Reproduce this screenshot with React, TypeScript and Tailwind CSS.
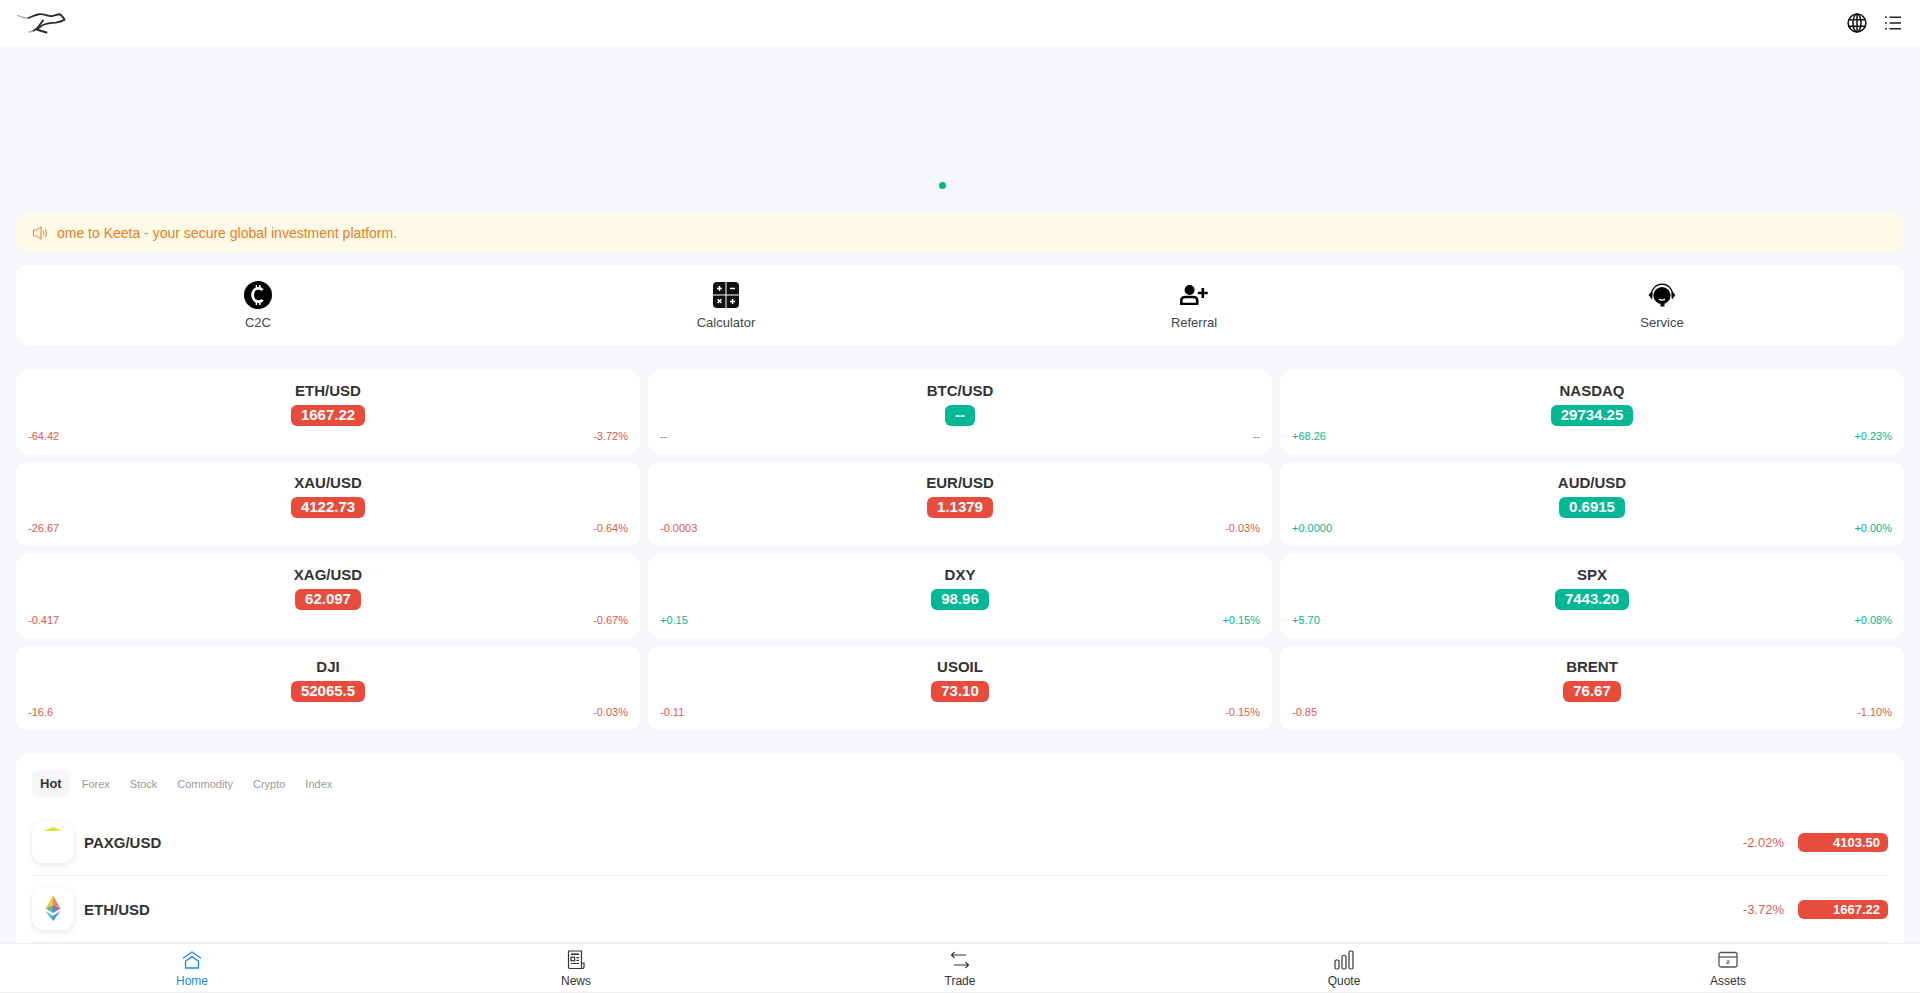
const tickers = [
  { name: "ETH/USD", price: "1667.22", diff: "-64.42", pct: "-3.72%", dir: "down" },
  { name: "BTC/USD", price: "--", diff: "--", pct: "--", dir: "none" },
  { name: "NASDAQ", price: "29734.25", diff: "+68.26", pct: "+0.23%", dir: "up" },
  { name: "XAU/USD", price: "4122.73", diff: "-26.67", pct: "-0.64%", dir: "down" },
  { name: "EUR/USD", price: "1.1379", diff: "-0.0003", pct: "-0.03%", dir: "down" },
  { name: "AUD/USD", price: "0.6915", diff: "+0.0000", pct: "+0.00%", dir: "up" },
  { name: "XAG/USD", price: "62.097", diff: "-0.417", pct: "-0.67%", dir: "down" },
  { name: "DXY", price: "98.96", diff: "+0.15", pct: "+0.15%", dir: "up" },
  { name: "SPX", price: "7443.20", diff: "+5.70", pct: "+0.08%", dir: "up" },
  { name: "DJI", price: "52065.5", diff: "-16.6", pct: "-0.03%", dir: "down" },
  { name: "USOIL", price: "73.10", diff: "-0.11", pct: "-0.15%", dir: "down" },
  { name: "BRENT", price: "76.67", diff: "-0.85", pct: "-1.10%", dir: "down" },
];

function Logo() {
  return (
    <svg viewBox="8 6 60 24" className="h-[24px] w-[60px]" fill="none" strokeLinecap="round" strokeLinejoin="round">
      <path d="M20 13C23 12.6 26 9.8 31 9.2C35 8.8 39 10.5 43 11.2C46 11.4 49 9 52 9.2C54 11 56 13 56.5 14.8C54 16 51 17 48 17.6C43 17.6 38 18.5 34 20.5L28.5 24.5L38.5 27.5" stroke="#2b2d33" strokeWidth="1.9" />
      <path d="M35 15.5L29 23.5L25 26" stroke="#2b2d33" strokeWidth="1.9" />
      <path d="M10 10.5C13 12.5 16 13.2 20 13" stroke="#a9abb0" strokeWidth="1.5" />
      <path d="M25 26L21 27" stroke="#a9abb0" strokeWidth="1.5" />
    </svg>
  );
}

function Globe() {
  return (
    <svg viewBox="0 0 20 20" className="h-[20px] w-[20px]" fill="none" stroke="#111" strokeWidth="1.5">
      <circle cx="10" cy="10" r="8.9" />
      <ellipse cx="10" cy="10" rx="4" ry="8.9" />
      <path d="M1.6 6.8H18.4M1.6 13.2H18.4M10 1V19" />
    </svg>
  );
}

function ListIcon() {
  return (
    <svg viewBox="0 0 16 14" className="h-[14px] w-[16px]" fill="none" stroke="#222" strokeWidth="1.4">
      <path d="M4.5 1.2H16M4.5 7H16M4.5 12.8H16" />
      <path d="M0 1.2H1.8M0 7H1.8M0 12.8H1.8" />
    </svg>
  );
}

function CoinIcon() {
  return (
    <svg viewBox="0 0 28 28" className="h-[28px] w-[28px]">
      <circle cx="14" cy="14" r="14" fill="#000" />
      <path d="M18.6 9.2C17.6 8 16 7.4 14.6 7.4C11 7.4 8.6 10.2 8.6 14C8.6 17.8 11 20.6 14.6 20.6C16 20.6 17.6 20 18.6 18.8" fill="none" stroke="#fff" strokeWidth="2.8" />
      <path d="M12.4 4V7.6M15.8 4V7.6M12.4 20.4V24M15.8 20.4V24" stroke="#fff" strokeWidth="1.5" />
    </svg>
  );
}

function CalcIcon() {
  return (
    <svg viewBox="0 0 26 26" className="h-[26px] w-[26px]">
      <rect x="0" y="0" width="26" height="26" rx="4" fill="#111" />
      <path d="M13 0V26M0 13H26" stroke="#fff" strokeWidth="1" />
      <path d="M4 6.5H9M6.5 4V9M17 6.5H22M4.6 17.2L8.4 21M8.4 17.2L4.6 21M17 19.5H22M19.5 17V22" stroke="#fff" strokeWidth="1.5" />
    </svg>
  );
}

function ReferralIcon() {
  return (
    <svg viewBox="0 0 28 20" className="h-[20px] w-[28px]">
      <circle cx="9.6" cy="5" r="5" fill="#000" />
      <path d="M1.3 19V15.5C1.3 13.2 3 12 5.5 12H13C15.5 12 17.2 13.2 17.2 15.5V19Z" fill="none" stroke="#000" strokeWidth="2.6" strokeLinejoin="round" />
      <path d="M22.8 3V13M17.8 8H27.8" stroke="#000" strokeWidth="2.6" />
    </svg>
  );
}

function ServiceIcon() {
  return (
    <svg viewBox="0 0 28 24" className="h-[24px] w-[28px]">
      <path d="M3.6 11.5A10.4 10.4 0 0 1 24.4 11.5" fill="none" stroke="#000" strokeWidth="1.3" />
      <circle cx="14" cy="12.5" r="8.6" fill="#000" />
      <path d="M4 8L0.6 12L4 16.5C4.8 13.5 4.8 11 4 8Z M24 8L27.4 12L24 16.5C23.2 13.5 23.2 11 24 8Z" fill="#000" />
      <path d="M11 16C12.5 17.4 15.5 17.4 17 16" fill="none" stroke="#fff" strokeWidth="1.2" />
      <path d="M12.5 20.5H16.5V23.5H12.5Z" fill="#000" />
    </svg>
  );
}

function HomeIcon() {
  return (
    <svg viewBox="0 0 20 18" className="h-[18px] w-[20px]" fill="none" stroke="#1e88e5" strokeWidth="1.3" strokeLinejoin="round">
      <path d="M1 7.2L10 1L19 7.2" />
      <path d="M3.5 10.2L10 5.6L16.5 10.2V17H3.5Z" />
    </svg>
  );
}

function NewsIcon() {
  return (
    <svg viewBox="0 0 20 20" className="h-[20px] w-[20px]" fill="none" stroke="#333" strokeWidth="1.2">
      <path d="M2.5 1H15.5V18.5H4C3 18.5 2.5 18 2.5 17Z" />
      <path d="M15.5 13H18V17C18 18 17.4 18.5 16.6 18.5H4" />
      <path d="M5 4.2H13" strokeWidth="1.6" />
      <rect x="5" y="7.2" width="3.6" height="3.6" />
      <path d="M10.4 7.6H13M10.4 10.4H13M5 13.5H13" />
    </svg>
  );
}

function TradeIcon() {
  return (
    <svg viewBox="0 0 20 20" className="h-[20px] w-[20px]" fill="none" stroke="#333" strokeWidth="1.1">
      <path d="M1.5 5H16M4.5 2L1.5 5L4.5 8" />
      <path d="M4 15H18.5M15.5 12L18.5 15L15.5 18" />
    </svg>
  );
}

function QuoteIcon() {
  return (
    <svg viewBox="0 0 20 20" className="h-[20px] w-[20px]" fill="none" stroke="#333" strokeWidth="1.2">
      <rect x="1" y="10" width="4" height="9" rx="1.5" />
      <rect x="8" y="5.5" width="4" height="13.5" rx="1.5" />
      <rect x="15" y="1" width="4" height="18" rx="1.5" />
    </svg>
  );
}

function AssetsIcon() {
  return (
    <svg viewBox="0 0 20 18" className="h-[18px] w-[20px]" fill="none" stroke="#555" strokeWidth="1.3">
      <rect x="1" y="1.5" width="18" height="14.5" rx="2" />
      <path d="M1 6H19" />
      <path d="M8.8 9.8H11.2V11.2H8.8V12.6H11.2" strokeWidth="0.8" />
    </svg>
  );
}

function PaxgIcon() {
  return (
    <svg viewBox="0 0 42 42" className="h-[42px] w-[42px]">
      <path d="M12 10L21 6L30 10Z" fill="#dfe325" />
    </svg>
  );
}

function EthIcon() {
  return (
    <svg viewBox="0 0 42 42" className="h-[42px] w-[42px]">
      <path d="M21 7.5L13.5 20.5L21 17Z" fill="#f6c945" />
      <path d="M21 7.5L28.5 20.5L21 17Z" fill="#ee8a5e" />
      <path d="M13.5 20.5L21 17V25Z" fill="#5fb88c" />
      <path d="M28.5 20.5L21 17V25Z" fill="#8a6fc0" />
      <path d="M13.5 23L21 28V33Z" fill="#3fb6d8" />
      <path d="M28.5 23L21 28V33Z" fill="#3f8fd8" />
    </svg>
  );
}

const tabs = ["Forex", "Stock", "Commodity", "Crypto", "Index"];

export default function App() {
  return (
    <div className="flex h-[993px] flex-col overflow-hidden bg-[#f5f7fb] font-['Liberation_Sans','Arial',sans-serif] text-[#333]">
      <header className="flex h-[46px] shrink-0 items-center justify-between bg-white pl-[16px] pr-[19px]">
        <Logo />
        <div className="flex items-center gap-[18px]">
          <Globe />
          <ListIcon />
        </div>
      </header>

      <main className="flex-1 overflow-hidden px-4">
        <div className="flex h-[155px] items-end justify-center gap-[11px] pb-3">
          <span className="h-[7px] w-[7px] rounded-full bg-[#00b894]" />
          <span className="h-[7px] w-[7px] rounded-full bg-[#f2f5f9]" />
          <span className="h-[7px] w-[7px] rounded-full bg-[#f2f5f9]" />
        </div>

        <div className="mt-3 flex h-[39px] items-center rounded-[10px] bg-[#fffbe8] pl-[17px] text-[#e67e22]">
          <svg viewBox="0 0 15 14" className="h-[14px] w-[15px]" fill="none" stroke="#e67e22" strokeWidth="1">
            <path d="M0.5 4H3.5L8 0.8V13.2L3.5 10H0.5Z" />
            <path d="M10.2 4.5C11 6 11 8 10.2 9.5M12.5 3C13.8 5.5 13.8 8.5 12.5 11" />
          </svg>
          <span className="ml-[9px] pt-px text-[14px]">ome to Keeta - your secure global investment platform.</span>
        </div>

        <div className="mt-[13px] grid h-[80px] grid-cols-4 rounded-xl bg-white px-2">
          {[
            { label: "C2C", icon: <CoinIcon /> },
            { label: "Calculator", icon: <CalcIcon /> },
            { label: "Referral", icon: <ReferralIcon /> },
            { label: "Service", icon: <ServiceIcon /> },
          ].map((item) => (
            <div key={item.label} className="flex flex-col items-center pt-4">
              <div className="flex h-[28px] items-center justify-center">{item.icon}</div>
              <span className="mt-[6px] text-[13px] leading-[16px] text-[#444]">{item.label}</span>
            </div>
          ))}
        </div>

        <div className="mt-[25px] grid grid-cols-3 gap-2">
          {tickers.map((t) => {
            const badge = t.dir === "down" ? "bg-[#e74c3c]" : "bg-[#00b894]";
            const small = t.dir === "down" ? "text-[#dc5a4e]" : t.dir === "up" ? "text-[#00b894]" : "text-[#888]";
            return (
              <div key={t.name} className="flex h-[84px] flex-col items-center rounded-xl bg-white pt-3">
                <div className="text-[15px] font-bold leading-[18px]">{t.name}</div>
                <div className={`mt-[5px] flex h-[21px] items-center rounded-md px-[10px] text-[15px] font-bold text-white ${badge}`}>
                  {t.price}
                </div>
                <div className={`mt-px flex w-full justify-between px-3 text-[11px] leading-[18px] ${small}`}>
                  <span>{t.diff}</span>
                  <span>{t.pct}</span>
                </div>
              </div>
            );
          })}
        </div>

        <div className="mt-6 rounded-t-xl bg-white px-4 pt-4">
          <div className="flex items-center gap-1">
            <span className="flex h-[27px] items-center rounded-md bg-[#f5f7fb] px-2 pt-px text-[13px] font-bold">Hot</span>
            {tabs.map((tab) => (
              <span key={tab} className="px-2 pt-px text-[11px] text-[#999]">{tab}</span>
            ))}
          </div>

          <div className="mt-3">
            <div className="flex h-[66px] items-center justify-between border-b border-[#eee] box-content">
              <div className="flex items-center">
                <div className="h-[42px] w-[42px] rounded-xl bg-white shadow-[0_2px_6px_rgba(0,0,0,0.1)]">
                  <PaxgIcon />
                </div>
                <span className="ml-[10px] pt-[2px] text-[15px] font-bold">PAXG/USD</span>
              </div>
              <div className="flex items-center">
                <span className="pt-[2px] text-[13px] text-[#dc5a4e]">-2.02%</span>
                <span className="ml-[14px] flex h-[19px] w-[90px] items-center justify-end rounded-md bg-[#e74c3c] pr-2 pt-[2px] text-[13px] font-bold text-white">4103.50</span>
              </div>
            </div>
            <div className="flex h-[66px] items-center justify-between border-b border-[#eee] box-content">
              <div className="flex items-center">
                <div className="h-[42px] w-[42px] rounded-xl bg-white shadow-[0_2px_6px_rgba(0,0,0,0.1)]">
                  <EthIcon />
                </div>
                <span className="ml-[10px] pt-[2px] text-[15px] font-bold">ETH/USD</span>
              </div>
              <div className="flex items-center">
                <span className="pt-[2px] text-[13px] text-[#dc5a4e]">-3.72%</span>
                <span className="ml-[14px] flex h-[19px] w-[90px] items-center justify-end rounded-md bg-[#e74c3c] pr-2 pt-[2px] text-[13px] font-bold text-white">1667.22</span>
              </div>
            </div>
          </div>
        </div>
      </main>

      <nav className="grid h-[50px] shrink-0 grid-cols-5 border-y border-[#f0f0f0] bg-white">
        {[
          { label: "Home", icon: <HomeIcon />, color: "text-[#1e88e5]" },
          { label: "News", icon: <NewsIcon />, color: "text-[#333]" },
          { label: "Trade", icon: <TradeIcon />, color: "text-[#333]" },
          { label: "Quote", icon: <QuoteIcon />, color: "text-[#333]" },
          { label: "Assets", icon: <AssetsIcon />, color: "text-[#333]" },
        ].map((item) => (
          <div key={item.label} className="flex flex-col items-center pt-[6px]">
            <div className="flex h-[20px] items-center justify-center">{item.icon}</div>
            <span className={`mt-[3px] text-[12px] leading-[16px] ${item.color}`}>{item.label}</span>
          </div>
        ))}
      </nav>
    </div>
  );
}
